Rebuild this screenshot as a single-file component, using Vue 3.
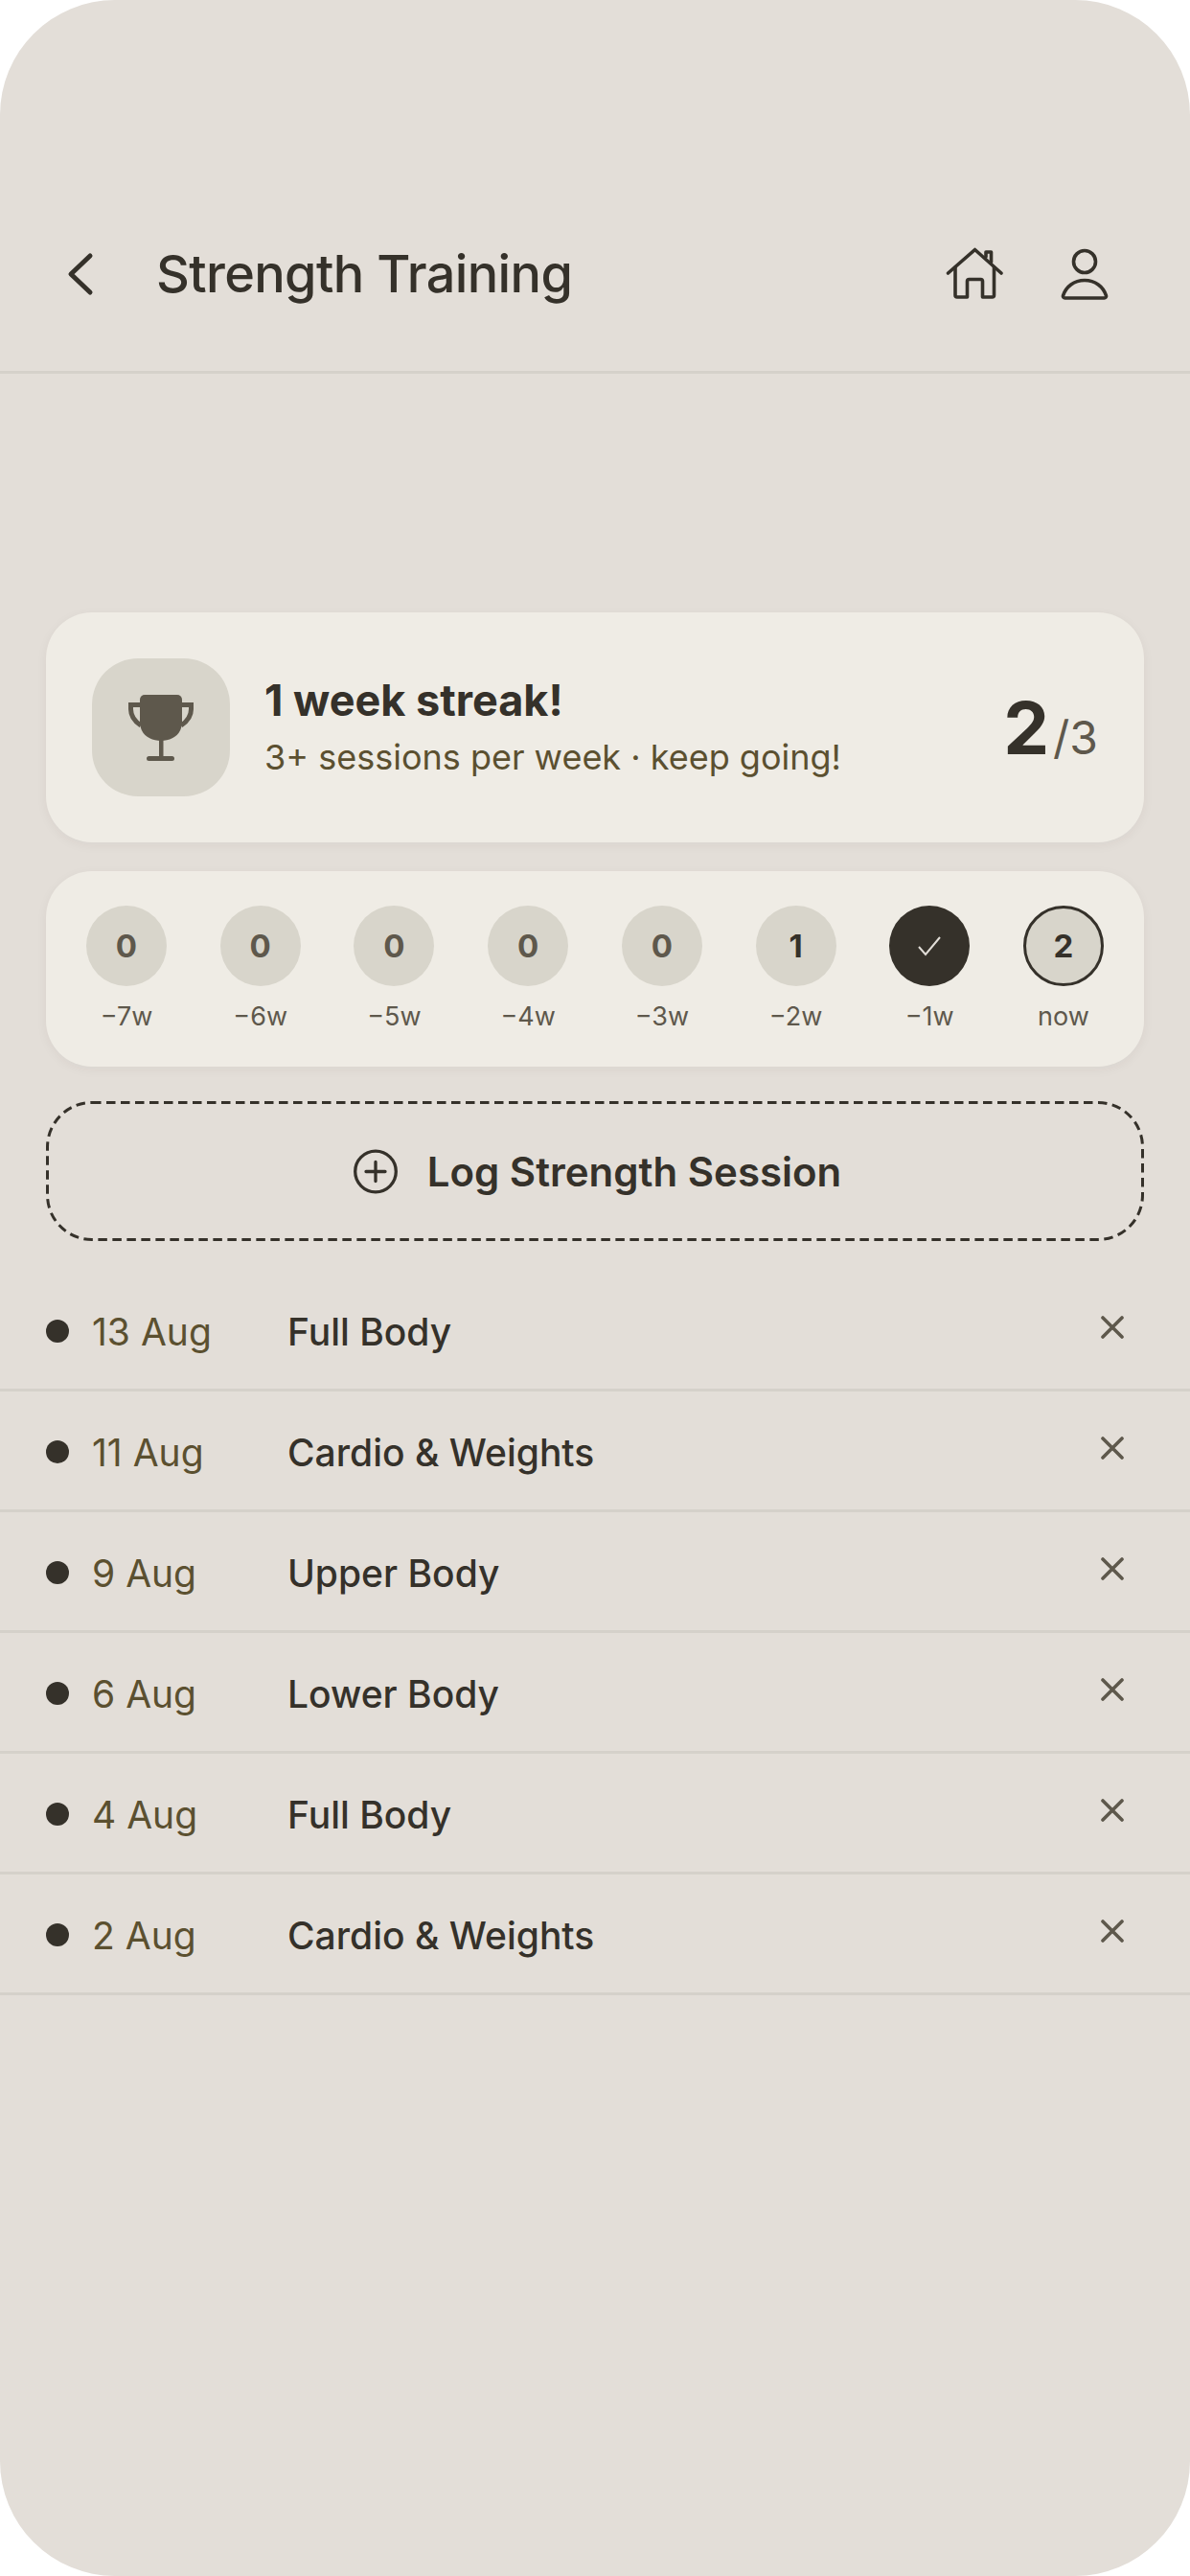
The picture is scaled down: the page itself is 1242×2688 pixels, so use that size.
<script setup>
const weeks = [
  { label: "−7w", value: "0" },
  { label: "−6w", value: "0" },
  { label: "−5w", value: "0" },
  { label: "−4w", value: "0" },
  { label: "−3w", value: "0" },
  { label: "−2w", value: "1", some: true },
  { label: "−1w", done: true },
  { label: "now", value: "2", some: true, current: true },
];

const sessions = [
  { date: "13 Aug", name: "Full Body" },
  { date: "11 Aug", name: "Cardio & Weights" },
  { date: "9 Aug", name: "Upper Body" },
  { date: "6 Aug", name: "Lower Body" },
  { date: "4 Aug", name: "Full Body" },
  { date: "2 Aug", name: "Cardio & Weights" },
];
</script>

<template>
  <div class="screen">
    <header class="topbar">
      <button class="back" type="button" aria-label="Back">
        <svg width="30" height="46" viewBox="0 0 30 46" fill="none" stroke="currentColor" stroke-width="5" stroke-linecap="round" stroke-linejoin="round">
          <polyline points="25 4 5 23 25 42"></polyline>
        </svg>
      </button>
      <h1 class="topbar__title">Strength Training</h1>
      <div class="topbar__icons">
        <svg width="60" height="56" viewBox="0 0 60 56" fill="none" stroke="currentColor" stroke-width="3.6" stroke-linecap="round" stroke-linejoin="round">
          <path d="M2.500 27 30.500 2.500 58 27"></path>
          <path d="M10 21v29a2 2 0 0 0 2 2h10.500V35.500a2 2 0 0 1 2-2h12a2 2 0 0 1 2 2V52h10a2 2 0 0 0 2-2V21"></path>
          <path d="M42 10V5h5.500v10.500"></path>
        </svg>
        <svg width="54" height="56" viewBox="0 0 54 56" fill="none" stroke="currentColor" stroke-width="3.6" stroke-linecap="round" stroke-linejoin="round">
          <circle cx="27" cy="15" r="11.500"></circle>
          <path d="M6.500 53h41a2 2 0 0 0 2-2.500C46.500 41 38 34.500 27 34.500S7.500 41 4.500 50.500a2 2 0 0 0 2 2.500z"></path>
        </svg>
      </div>
    </header>

    <main class="content">
      <section class="card streak">
        <div class="streak__badge">
          <svg class="trophy" width="68" height="70" viewBox="0 0 68 70">
            <path fill="#5e584c" d="M12 5a5 5 0 0 1 5-5h34a5 5 0 0 1 5 5v23c0 14-11 20-22 20S12 42 12 28z"></path>
            <path fill="none" stroke="#5e584c" stroke-width="5" d="M13 10.500H2.500V15c0 7 4.500 13 10.500 17M55 10.500h10.500V15c0 7-4.500 13-10.500 17"></path>
            <rect x="32" y="46" width="4.500" height="20" fill="#5e584c"></rect>
            <rect x="19" y="64" width="29" height="5" rx="2.500" fill="#5e584c"></rect>
          </svg>
        </div>
        <div class="streak__text">
          <div class="streak__title">1 week streak!</div>
          <div class="streak__sub">3+ sessions per week · keep going!</div>
        </div>
        <div class="streak__count"><b>2</b><span>/3</span></div>
      </section>

      <section class="card weeks">
        <div v-for="week in weeks" :key="week.label" class="week">
          <div class="week__dot" :class="{ some: week.some, done: week.done, current: week.current }">
            <svg v-if="week.done" width="26" height="22" viewBox="0 0 26 22" fill="none" stroke="currentColor" stroke-width="2">
              <polyline points="2 12 9 20 24 2"></polyline>
            </svg>
            <template v-else>{{ week.value }}</template>
          </div>
          <span class="week__label">{{ week.label }}</span>
        </div>
      </section>

      <button class="log" type="button">
        <svg class="log__outline" width="1146" height="146" viewBox="0 0 1146 146" fill="none">
          <rect x="1.500" y="1.500" width="1143" height="143" rx="46.500" stroke="#35312a" stroke-width="3" stroke-dasharray="9.500 5.500"></rect>
        </svg>
        <svg width="46" height="47" viewBox="0 0 46 47" fill="none" stroke="currentColor" stroke-width="3.300" stroke-linecap="round">
          <circle cx="23" cy="23.500" r="21.300"></circle>
          <path d="M23 13.500v20M13 23.500h20"></path>
        </svg>
        Log Strength Session
      </button>
    </main>

    <ul class="sessions">
      <li v-for="s in sessions" :key="s.date" class="session">
        <span class="session__dot"></span>
        <span class="session__date">{{ s.date }}</span>
        <span class="session__name">{{ s.name }}</span>
        <svg class="session__remove" width="24" height="24" viewBox="0 0 24 24" fill="none" stroke="currentColor" stroke-width="3.600" stroke-linecap="round">
          <path d="M2 2l20 20M22 2 2 22"></path>
        </svg>
      </li>
    </ul>
  </div>
</template>

<style>
html,
body {
  background: #fff;
}
</style>

<style scoped>
.screen {
  --ink: #35312a;
  --muted: #5e584c;
  --olive: #5b5030;
  --line: #d5d1ca;
  --chip: #d8d5cb;
  --card: #efece5;

  height: 2688px;
  box-sizing: border-box;
  overflow: hidden;
  border-radius: 120px;
  background: #e3ded8;
  color: var(--ink);
  font-family: Inter, "Liberation Sans", sans-serif;
}

.topbar {
  display: flex;
  align-items: center;
  height: 390px;
  box-sizing: border-box;
  padding: 232px 83px 47px 69px;
  border-bottom: 3px solid var(--line);
}

.back {
  display: flex;
  padding: 0;
  border: 0;
  background: none;
  color: var(--ink);
}

.topbar__title {
  flex: 1;
  margin: 0 0 0 64px;
  font-size: 54px;
  font-weight: 500;
  line-height: 66px;
  letter-spacing: -0.65px;
}

.topbar__icons {
  display: flex;
  align-items: center;
  gap: 58px;
}

.content {
  display: flex;
  flex-direction: column;
  padding: 249px 48px 0;
}

.card {
  background: var(--card);
  border-radius: 48px;
  box-shadow: 0 3px 12px rgba(53, 49, 42, 0.05);
}

.streak {
  display: flex;
  align-items: center;
  height: 240px;
  box-sizing: border-box;
  padding: 0 48px;
}

.streak__badge {
  display: flex;
  align-items: center;
  justify-content: center;
  width: 144px;
  height: 144px;
  border-radius: 48px;
  background: var(--chip);
}

.trophy {
  margin-top: 2px;
}

.streak__text {
  flex: 1;
  margin: 0 0 3px 36px;
}

.streak__title {
  font-size: 45px;
  font-weight: 700;
  line-height: 56px;
}

.streak__sub {
  margin-top: 9px;
  color: var(--olive);
  font-size: 36px;
  line-height: 44px;
}

.streak__count {
  display: flex;
  align-items: baseline;
}

.streak__count b {
  font-size: 76px;
  font-weight: 700;
}

.streak__count span {
  margin-left: 4px;
  color: var(--muted);
  font-size: 48px;
}

.weeks {
  display: flex;
  justify-content: space-between;
  margin-top: 30px;
  height: 204px;
  box-sizing: border-box;
  padding: 36px 42px 0;
}

.week {
  display: flex;
  flex-direction: column;
  align-items: center;
  width: 84px;
}

.week__dot {
  display: flex;
  align-items: center;
  justify-content: center;
  width: 84px;
  height: 84px;
  flex: none;
  box-sizing: border-box;
  border-radius: 50%;
  background: var(--chip);
  color: var(--muted);
  font-size: 33px;
  font-weight: 700;
}

.week__dot.some {
  color: var(--ink);
}

.week__dot.done {
  background: var(--ink);
  color: #e2ded8;
}

.week__dot.current {
  border: 3px solid var(--ink);
}

.week__label {
  margin-top: 16px;
  color: var(--muted);
  font-size: 27px;
  line-height: 32px;
  white-space: nowrap;
}

.log {
  position: relative;
  display: flex;
  align-items: center;
  justify-content: center;
  gap: 31px;
  height: 146px;
  margin-top: 36px;
  padding: 0 0 0 5px;
  border: 0;
  background: none;
  color: var(--ink);
  font-family: inherit;
  font-size: 42px;
  font-weight: 600;
}

.log__outline {
  position: absolute;
  left: 0;
  top: 0;
}

.sessions {
  margin: 31px 0 0;
  padding: 0;
  list-style: none;
}

.session {
  display: flex;
  align-items: center;
  height: 126px;
  box-sizing: border-box;
  padding: 0 69px 0 48px;
  border-bottom: 3px solid var(--line);
}

.session__dot {
  width: 24px;
  height: 24px;
  margin-top: 3px;
  border-radius: 50%;
  background: var(--ink);
}

.session__date {
  width: 204px;
  margin: 4px 0 0 24px;
  color: var(--olive);
  font-size: 39px;
}

.session__name {
  flex: 1;
  margin-top: 4px;
  font-size: 39px;
  font-weight: 500;
}

.session__remove {
  margin-bottom: 5px;
  color: var(--muted);
}
</style>
